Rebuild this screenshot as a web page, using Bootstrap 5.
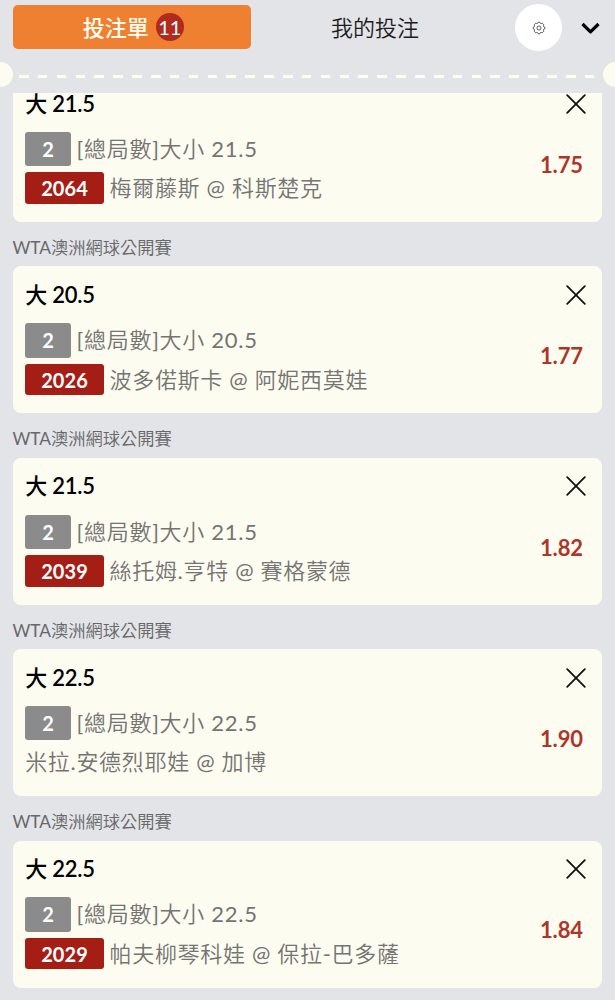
<!DOCTYPE html>
<html lang="zh-Hant">
<head>
<meta charset="utf-8">
<meta name="viewport" content="width=device-width, initial-scale=1">
<title>投注單</title>
<link href="https://cdn.jsdelivr.net/npm/bootstrap@5.3.0/dist/css/bootstrap.min.css" rel="stylesheet">
<style>
body{background:#e3e4e7;font-family:Lato,"Noto Sans CJK TC DemiLight","Noto Sans CJK TC",sans-serif;height:1000px;overflow:hidden;color:#000}
.topbar{height:60px;padding:5px 13px 0 12.5px}
.tab-on{width:238.5px;height:44px;background:#ef8031;color:#fffdf0;border-radius:5px;font-size:22px;border:0;padding:0 0 0 3px;gap:7px}
.tab-on span:first-child{font-family:"Noto Sans CJK TC",sans-serif;font-weight:500;margin-top:-2px}
.tab-off{width:265px;height:44px;font-size:22px;color:#1c1c1e;border:0;background:none;padding:0 17px 0 0}
.count{width:28px;height:28px;background:#b02a1d;font-size:20px;line-height:28px;color:#fff}
.gear{width:47px;height:47px;background:#fff;border:0;padding:0 0 0 1px;margin:-1px 0 0 -1px}
.tear{height:33.3px;position:relative}
.tear::before,.tear::after{content:"";position:absolute;width:25px;height:25px;border-radius:50%;background:#fdfcf0;top:2px}
.tear::before{left:-12.5px}.tear::after{right:-12.5px}
.dashes{position:absolute;left:19px;right:18px;top:14.5px;height:3.5px;background:repeating-linear-gradient(90deg,#fdfcf0 0 9.6px,transparent 9.6px 18.86px)}
.slip-list{padding:0 13px 0 12.5px}
.slip{height:147px;background:#fdfcf1;border-radius:8px;padding:0 13px 0 12.7px;position:relative}
.event{height:44.4px;font-size:17.25px;line-height:51px;color:#67686a;white-space:nowrap}
.pick{font-family:Lato,"Noto Sans CJK TC",sans-serif;font-size:22px;font-weight:500;line-height:20px;padding-top:18.7px;height:56.8px;letter-spacing:-.25px}
.pick b{font-weight:600}
.info{font-size:22px;color:#747472;letter-spacing:.71px;font-weight:400;line-height:34.9px;white-space:nowrap;gap:5.7px}
.info.teams{height:31.5px;line-height:31.2px;margin-top:6px;letter-spacing:.68px}
.info:not(.teams){height:34.5px}
.tag{color:#fff;font-weight:700;font-size:20px;letter-spacing:.1px;border-radius:3px;text-align:center}
.tag-n{background:#8b8b8b;width:45.7px;height:34.5px}
.tag-id{background:#a51e16;width:78.7px;height:31.5px;line-height:33px}
.odds{position:absolute;right:19px;top:73.9px;font-size:22px;line-height:32px;font-weight:700;color:#b03529;letter-spacing:-.1px}
.close-x{position:absolute;right:16px;top:18.7px;width:20px;height:20px}
/* first slip is scrolled partly under the header */
.slip.scrolled{height:128.7px;border-radius:0 0 8px 8px}
.scrolled .pick{padding-top:.8px;height:38.5px}
.scrolled .odds{top:55.4px}
.scrolled .close-x{top:.4px}
</style>
</head>
<body>
<header class="topbar d-flex align-items-start">
  <button class="tab-on d-flex align-items-center justify-content-center"><span>投注單</span><span class="count rounded-circle">11</span></button>
  <button class="tab-off">我的投注</button>
  <button class="gear rounded-circle d-flex align-items-center justify-content-center" aria-label="設定">
    <svg width="14" height="14" viewBox="0 0 16 16" fill="none" stroke="#333" stroke-width=".9" stroke-linejoin="round"><circle cx="8" cy="8" r="2.3"/><path d="M6.200 2.800Q7 2.400 7 1.400H9Q9 2.400 9.800 2.800T11.700 2.500L13.500 4.300Q12.800 5.300 13.200 6.200T14.600 7V9Q13.600 9 13.200 9.800T13.500 11.700L11.700 13.500Q10.700 12.800 9.800 13.200T9 14.600H7Q7 13.600 6.200 13.200T4.300 13.500L2.500 11.700Q3.200 10.700 2.800 9.800T1.400 9V7Q2.400 7 2.800 6.200T2.500 4.300L4.300 2.500Q5.300 3.200 6.200 2.800Z"/></svg>
  </button>
  <svg class="ms-auto me-0" width="21" height="44" viewBox="0 0 21 44" fill="none" stroke="#000" stroke-width="3.2" stroke-linejoin="round"><path d="M1.500 19l8 7.800 8-7.800"/></svg>
</header>
<div class="tear"><div class="dashes"></div></div>
<main class="slip-list" id="slips"></main>
<script src="https://cdn.jsdelivr.net/npm/bootstrap@5.3.0/dist/js/bootstrap.bundle.min.js"></script>
<script>
const bets=[
 ['21.5','2064','梅爾藤斯 @ 科斯楚克','1.75'],
 ['20.5','2026','波多偌斯卡 @ 阿妮西莫娃','1.77'],
 ['21.5','2039','絲托姆.亨特 @ 賽格蒙德','1.82'],
 ['22.5','','米拉.安德烈耶娃 @ 加博','1.90'],
 ['22.5','2029','帕夫柳琴科娃 @ 保拉-巴多薩','1.84']];
document.getElementById('slips').innerHTML=bets.map(([n,id,teams,odds],i)=>`<section class="slip${i?'':' scrolled'}">
<div class="pick">大 <b>${n}</b></div>
<div class="info d-flex"><span class="tag tag-n">2</span><span>[總局數]大小 ${n}</span></div>
<div class="info teams d-flex">${id?`<span class="tag tag-id">${id}</span>`:''}<span>${teams}</span></div>
<svg class="close-x" viewBox="0 0 20 20" stroke="#111" stroke-width="1.8" stroke-linecap="round"><path d="M1.200 1.200 18.800 18.800M18.800 1.200 1.200 18.800"/></svg>
<div class="odds">${odds}</div></section>`).join('<div class="event">WTA澳洲網球公開賽</div>');
</script>
</body>
</html>
